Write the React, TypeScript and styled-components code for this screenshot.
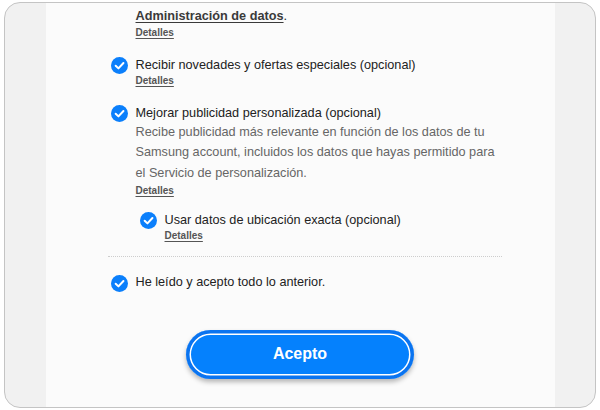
import React from "react";
import styled, { createGlobalStyle } from "styled-components";

const Global = createGlobalStyle`
  html, body { margin: 0; padding: 0; background: #ffffff; }
  body { font-family: "Liberation Sans", Arial, Helvetica, sans-serif; }
  * { box-sizing: border-box; }
`;

const Frame = styled.div`
  margin: 2px 0 0 4px;
  width: 592px;
  height: 406px;
  border: 1px solid #c4c4c4;
  border-radius: 16px;
  background: #f1f1f1;
  overflow: hidden;
  display: flex;
  justify-content: center;
`;

const Column = styled.main`
  width: 509px;
  height: 100%;
  background: #fbfbfb;
  padding: 4px 53px 0 62px;
  display: flex;
  flex-direction: column;
`;

const Item = styled.div<{ $indent?: boolean; $gap: number }>`
  display: flex;
  align-items: flex-start;
  gap: 8px;
  margin-top: ${(p) => p.$gap}px;
  padding-left: ${(p) => (p.$indent ? 32 : 3)}px;
`;

const CheckBox = styled.span<{ $hidden?: boolean }>`
  flex: none;
  width: 17px;
  height: 17px;
  margin-top: 1.5px;
  display: block;
  visibility: ${(p) => (p.$hidden ? "hidden" : "visible")};
  svg { display: block; }
`;

const Body = styled.div`
  display: flex;
  flex-direction: column;
  min-width: 0;
`;

const Label = styled.div`
  font-size: 12.7px;
  line-height: 18px;
  color: #222222;
  white-space: nowrap;
`;

const StrongLink = styled.span`
  font-weight: 700;
  color: #3a3a3a;
  text-decoration: underline;
  text-underline-offset: 2px;
`;

const Desc = styled.p`
  margin: 0;
  font-size: 12.7px;
  line-height: 20.5px;
  color: #666666;
  white-space: nowrap;
`;

const Details = styled.a`
  align-self: flex-start;
  margin-top: 0.5px;
  font-size: 10px;
  line-height: 14px;
  font-weight: 700;
  color: #555555;
  text-decoration: underline;
  text-underline-offset: 1.5px;
  cursor: pointer;
`;

const Divider = styled.hr`
  margin: 13px 0 0;
  width: 394px;
  border: 0;
  border-top: 1px dotted #cdcdcd;
  height: 0;
`;

const AcceptButton = styled.button`
  align-self: center;
  margin: 38px 0 0 -9px;
  width: 228px;
  height: 49px;
  border: 0;
  border-radius: 25px;
  background: #0581fd;
  box-shadow: inset 0 0 0 3.5px #0a74f0, inset 0 0 0 5px #ffffff,
    0 3px 5px rgba(0, 0, 0, 0.28);
  color: #ffffff;
  font-family: "Liberation Sans", Arial, Helvetica, sans-serif;
  font-size: 16px;
  font-weight: 700;
  cursor: pointer;
`;

const Check = ({ hidden }: { hidden?: boolean }) => (
  <CheckBox $hidden={hidden}>
    <svg width="17" height="17" viewBox="0 0 16 16">
      <circle cx="8" cy="8" r="8" fill="#0b7ffb" />
      <polyline
        points="4.4,8.2 7,10.7 11.7,5.7"
        fill="none"
        stroke="#ffffff"
        strokeWidth="1.9"
        strokeLinecap="round"
        strokeLinejoin="round"
      />
    </svg>
  </CheckBox>
);

export default function App() {
  return (
    <>
      <Global />
      <Frame>
        <Column>
          <Item $gap={0}>
            <Check hidden />
            <Body>
              <Label>
                <StrongLink>Administración de datos</StrongLink>.
              </Label>
              <Details>Detalles</Details>
            </Body>
          </Item>

          <Item $gap={16}>
            <Check />
            <Body>
              <Label>Recibir novedades y ofertas especiales (opcional)</Label>
              <Details>Detalles</Details>
            </Body>
          </Item>

          <Item $gap={15.5}>
            <Check />
            <Body>
              <Label>Mejorar publicidad personalizada (opcional)</Label>
              <Desc>
                Recibe publicidad más relevante en función de los datos de tu
                <br />
                Samsung account, incluidos los datos que hayas permitido para
                <br />
                el Servicio de personalización.
              </Desc>
              <Details>Detalles</Details>
            </Body>
          </Item>

          <Item $gap={13} $indent>
            <Check />
            <Body>
              <Label>Usar datos de ubicación exacta (opcional)</Label>
              <Details>Detalles</Details>
            </Body>
          </Item>

          <Divider />

          <Item $gap={16}>
            <Check />
            <Body>
              <Label>He leído y acepto todo lo anterior.</Label>
            </Body>
          </Item>

          <AcceptButton>Acepto</AcceptButton>
        </Column>
      </Frame>
    </>
  );
}
